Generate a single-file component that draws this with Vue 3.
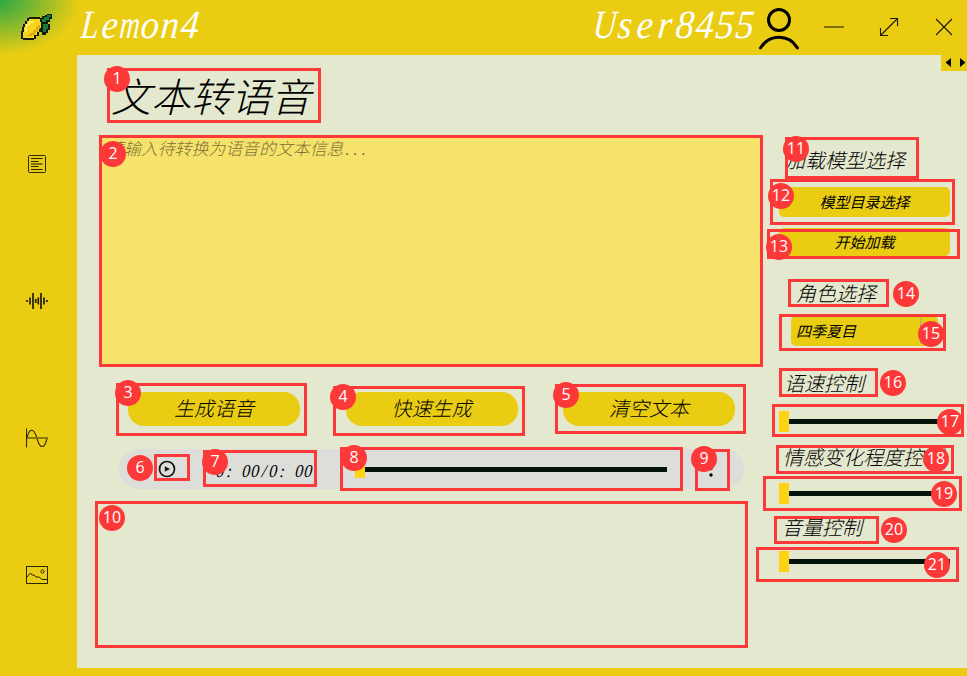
<script setup>
const navIcons = ['doc', 'wave', 'sine', 'image']
const actions = ['生成语音', '快速生成', '清空文本']

// Annotation frames: left, top, right, bottom, then badge centre
const marks = [
  [107, 68, 321, 123, 117, 79],
  [99, 135, 763, 367, 113, 154],
  [116, 383, 307, 436, 128, 393],
  [333, 386, 525, 436, 343, 397],
  [555, 384, 746, 434, 566, 395],
  [154, 454, 190, 481, 140, 468],
  [203, 450, 317, 487, 215, 462],
  [340, 447, 683, 491, 354, 458],
  [695, 449, 730, 491, 704, 459],
  [95, 501, 748, 648, 112, 518],
  [785, 137, 919, 179, 796, 149],
  [770, 179, 955, 225, 781, 196],
  [767, 229, 960, 259, 779, 247],
  [788, 279, 889, 307, 906, 294],
  [779, 314, 946, 351, 931, 334],
  [779, 368, 878, 397, 893, 383],
  [772, 404, 964, 437, 950, 422],
  [776, 445, 954, 474, 936, 459],
  [763, 476, 962, 511, 944, 494],
  [774, 516, 879, 544, 894, 530],
  [756, 547, 959, 582, 937, 565],
]
const frameStyle = (m) => ({ left: m[0] + 'px', top: m[1] + 'px', width: m[2] - m[0] + 'px', height: m[3] - m[1] + 'px' })
const badgeStyle = (m) => ({ left: m[4] - 13 + 'px', top: m[5] - 13 + 'px' })
</script>

<template>
  <div class="window">
    <header class="topbar">
      <svg class="logo" width="34" height="28" viewBox="0 0 34 28" shape-rendering="crispEdges">
        <path fill="#161a06" d="M7 4H9V3H20V4H22V7H23V14H22V18H19V22H16V25H14V26H3V25H1V17H2V13H3V10H5V7H7Z" />
        <path fill="#161a06" d="M20 5H22V2H25V1H27V0H32V5H30V8H28V10H30V16H28V19H26V21H22V8H20Z" />
        <path fill="#f7d51d" d="M9 5H20V8H21V14H19V18H17V21H14V24H3V18H4V13H5V10H7V7H9Z" />
        <path fill="#fff27a" d="M9 7H13V9H10V11H8V13H6V10H9ZM5 14H7V18H5Z" />
        <path fill="#d6aa16" d="M18 11H20V15H18V18H15V21H12V22H7V21H10V19H13V16H16V13H18Z" />
        <path fill="#13813b" d="M22 5H24V3H27V1H31V3H29V6H26V8H22ZM23 10H28V15H26V18H23Z" />
      </svg>
      <h1 class="brand"><span v-for="(c, i) in 'Lemon4'" :key="i" :class="{ wide: c === 'm' }">{{ c }}</span></h1>
      <div class="user"><span v-for="(c, i) in 'User8455'" :key="i" :class="{ cap: c === 'U' }">{{ c }}</span></div>
      <svg class="avatar" width="42" height="44" viewBox="0 0 42 44" fill="none" stroke="#000" stroke-width="3">
        <circle cx="21" cy="13" r="10.5" />
        <path d="M2.500 41C11 26.500 31 26.500 39.500 41" stroke-linecap="round" />
      </svg>
      <svg class="winctl" width="132" height="22" viewBox="0 0 132 22" fill="none" stroke="#1c1a05" stroke-width="1.1">
        <path d="M0 11H20" stroke="#7d6e0c" stroke-width="2" />
        <path d="M56.500 19.500L73.500 2.500M66 2.500H73.500V10M56.500 12V19.500H64" />
        <path d="M112 3L128 19M128 3L112 19" />
      </svg>
    </header>

    <div class="body">
      <nav class="sidebar">
        <div v-for="n in navIcons" :key="n" class="nav-item">
          <svg width="22" height="22" viewBox="0 0 22 22" fill="none" stroke="#2b2706">
            <template v-if="n === 'doc'">
              <rect x="2.500" y="2.500" width="17" height="17" rx="1" />
              <path d="M5 5.500H16.500M5 8.500H12.500M5 13.500H12.500M5 16.500H16.500" /><path d="M5 11H16.500" stroke="#81710c" stroke-width="2" />
            </template>
            <template v-else-if="n === 'wave'">
              <path stroke="#171503" stroke-width="1.600" d="M1 10V12M4 7.500V14.500M7 3V19M9.700 9V13M12.300 7.500V14.500M15 3V19M18 7.500V14.500M21 10V12" />
            </template>
            <template v-else-if="n === 'sine'">
              <path d="M.5 1.500V20.500M1 11.500C3 .5 8 .5 11 11.500S18.500 22 21 11.500" stroke-width="1.100" /><path d="M1 11H22" stroke="#81710c" stroke-width="1.800" />
            </template>
            <template v-else>
              <rect x=".5" y="2.500" width="21" height="17" />
              <path d="M1 13L4.500 9L6 11L8 11L10 13L13 13L16 15.500H21.500" /><circle cx="16.500" cy="7.500" r="1.600" />
            </template>
          </svg>
        </div>
      </nav>

      <main class="content">
        <section class="left">
          <h2 class="title">文本转语音</h2>
          <div class="editor">请输入待转换为语音的文本信息<span class="dots">...</span></div>
          <div class="actions">
            <button v-for="a in actions" :key="a">{{ a }}</button>
          </div>
          <div class="player">
            <svg width="18" height="18" viewBox="0 0 18 18">
              <circle cx="9" cy="9" r="7.500" fill="none" stroke="#161616" stroke-width="1.700" />
              <path d="M6.800 6.200L12 9L6.800 11.800Z" fill="#161616" />
            </svg>
            <span class="time"><b v-for="(c, i) in '0：00/0：00'" :key="i" :class="{ colon: c === '：' }">{{ c === '：' ? ':' : c }}</b></span>
            <div class="slider track-main"></div>
            <svg class="more" width="4" height="18" viewBox="0 0 4 18"><circle cx="2" cy="2" r="1.700" /><circle cx="2" cy="8.500" r="1.700" /><circle cx="2" cy="15" r="1.700" /></svg>
          </div>
        </section>

        <aside class="right">
          <div class="tabs">
            <svg width="26" height="15" viewBox="0 0 26 15"><path d="M10 3V12L4.500 7.500ZM19 3V12L24.500 7.500Z" /></svg>
          </div>
          <div class="label model">加载模型选择</div>
          <button class="side-btn">模型目录选择</button>
          <button class="side-btn load">开始加载</button>
          <div class="label role">角色选择</div>
          <div class="combo"><span>四季夏目</span></div>
          <div class="label speed">语速控制</div>
          <div class="slider s1"></div>
          <div class="label emotion">情感变化程度控制</div>
          <div class="slider s2"></div>
          <div class="label volume">音量控制</div>
          <div class="slider s3"></div>
        </aside>
      </main>
    </div>

    <div class="marks">
      <template v-for="(m, i) in marks" :key="i">
        <div class="frame" :style="frameStyle(m)"></div>
        <div class="badge" :style="badgeStyle(m)">{{ i + 1 }}</div>
      </template>
    </div>
  </div>
</template>

<style>
body { margin: 0; overflow: hidden; }
</style>

<style scoped>
* { box-sizing: border-box; }
.window {
  position: relative; width: 967px; height: 676px; overflow: hidden;
  display: flex; flex-direction: column;
  background: radial-gradient(ellipse 80px 55px at 0 0, #2aa745 0, #eacd13 100%) #eacd13;
  font-family: "Noto Sans CJK SC", sans-serif; font-style: italic; font-weight: 300; color: #000;
}
.topbar { height: 55px; flex: none; display: flex; align-items: flex-start; padding-left: 20px; }
.logo { margin-top: 14px; flex: none; }
.brand, .user { display: flex; flex: none; margin: 0; font: italic 400 40px/50px "Liberation Serif", serif; color: #fff; }
.brand { width: 516px; margin-left: 26px; }
.brand span, .user span { display: flex; justify-content: center; width: 20px; transform: skewX(-5deg) scaleX(.92); }
.brand span.wide { transform: skewX(-5deg) scaleX(.7); }
.brand span:first-child, .user span.cap { transform: skewX(-5deg) scaleX(.8); }
.user { width: 162px; margin-left: -1px; margin-right: 1px; }
.avatar { margin-top: 7px; flex: none; }
.winctl { margin: 16px 0 0 24px; flex: none; }
.body { display: flex; height: 613px; }
.sidebar { width: 77px; flex: none; padding-top: 98px; }
.nav-item { height: 137px; padding-left: 26px; }
.nav-item svg { display: block; }
.content { width: 890px; display: flex; background: #e4e8ce; }
.left { width: 702px; padding: 10px 0 0 22px; }
.title { margin: 0; padding-left: 12px; height: 70px; font-size: 40px; line-height: 60px; font-weight: 300; }
.editor { width: 664px; height: 232px; padding: 1px 8px; background: #f7e36b; color: #7c7236; font-size: 16.900px; line-height: 24px; }
.dots { font-family: "Liberation Mono", monospace; font-size: 13.500px; }
.actions { display: flex; gap: 45.500px; padding: 25px 0 0 29px; }
button { border: 0; padding: 0; background: #eacd13; font: inherit; color: #000; }
.actions button { width: 172px; height: 34px; padding-bottom: 2px; border-radius: 16px; font-size: 20px; line-height: 32px; }
.side-btn, .combo { font-weight: 400; }
.player { display: flex; align-items: center; width: 625px; height: 40px; margin: 23px 0 0 20px; padding-left: 39px; border-radius: 20px; background: #dddeda; }
.time { display: flex; width: 139px; margin: 3px 0 0 40px; font: italic 18px/22px "Liberation Serif", serif; }
.time b { display: flex; justify-content: center; width: 8.800px; font-weight: 400; transform: skewX(-5deg) scaleX(.9); }
.time b.colon { width: 17.600px; justify-content: flex-start; padding-left: 1px; }
.slider { width: 171px; height: 21px; border-left: 10px solid #fcd412; background: linear-gradient(#02140a, #02140a) 0 8px / 100% 5px no-repeat; }
.track-main { width: 312px; margin-bottom: 3px; background-position: 0 10px; }
.more { margin-left: 42px; }
.right { flex: 1; display: flex; flex-direction: column; }
.tabs { align-self: flex-end; width: 26px; height: 16px; background: #eacd13; }
.tabs svg { display: block; }
.label { height: 30px; line-height: 30px; font-size: 20px; white-space: nowrap; padding-left: 6px; }
.model { margin-top: 74px; }
.side-btn { width: 171px; height: 30px; margin-top: 12px; border-radius: 5px; font-size: 15px; line-height: 30px; }
.load { height: 28px; margin-top: 11px; line-height: 28px; }
.role { margin-top: 22px; padding-left: 17px; }
.combo { width: 147px; height: 30px; margin: 8px 0 0 12px; padding-left: 5px; border-radius: 5px; background: #eacd13; font-size: 15px; line-height: 30px; display: flex; }
.combo::after { content: ""; margin: 2px 17px 2px auto; border-left: 1px solid #a9a9a0; }
.speed { margin-top: 22px; padding-left: 5px; }
.s1 { margin-top: 13px; }
.emotion { margin-top: 10px; padding-left: 4px; }
.s2 { margin-top: 11px; }
.volume { margin-top: 8px; padding-left: 3px; }
.s3 { margin-top: 9px; }
.marks { position: absolute; inset: 0; font: normal 400 16px/24px "Open Sans", sans-serif; }
.frame { position: absolute; border: 3px solid #fd3838; }
.badge { position: absolute; width: 26px; height: 26px; border-radius: 50%; background: #fd3838; color: #fff; text-align: center; }
</style>
